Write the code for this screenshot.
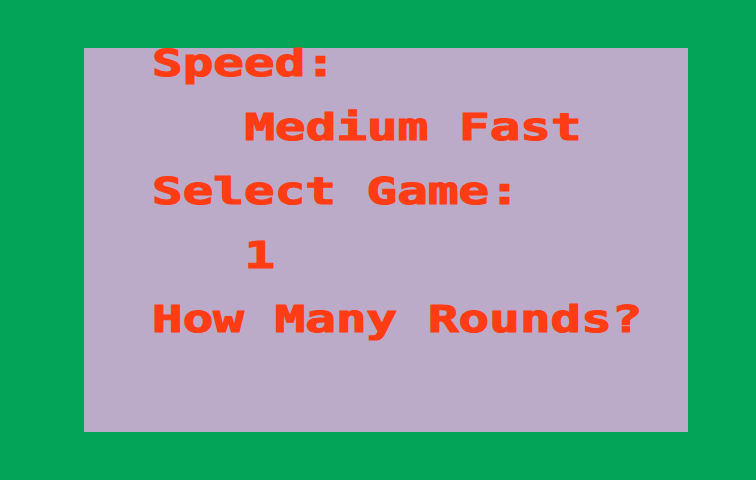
const lines: { text: string; indent?: boolean }[] = [
  { text: "Speed:" },
  { text: "Medium Fast", indent: true },
  { text: "Select Game:" },
  { text: "1", indent: true },
  { text: "How Many Rounds?" },
];

export default function App() {
  return (
    <div className="h-[480px] w-[756px] overflow-hidden bg-[#03a457] pt-[48px] pl-[84px]">
      {/* Menu card */}
      <div className="flow-root h-[384px] w-[604px] bg-[#bbabc8] pl-[68px]">
        <div className="-mt-[17px] font-['DejaVu_Sans_Mono',monospace] text-[38px] font-bold leading-[64px] text-[#ff3c14] [-webkit-text-stroke:1.2px_#ff3c14]">
          {lines.map((line) => (
            <div
              key={line.text}
              className={`origin-left scale-x-[1.34] whitespace-pre ${line.indent ? "pl-[69px]" : ""}`}
            >
              {line.text}
            </div>
          ))}
        </div>
      </div>
    </div>
  );
}
